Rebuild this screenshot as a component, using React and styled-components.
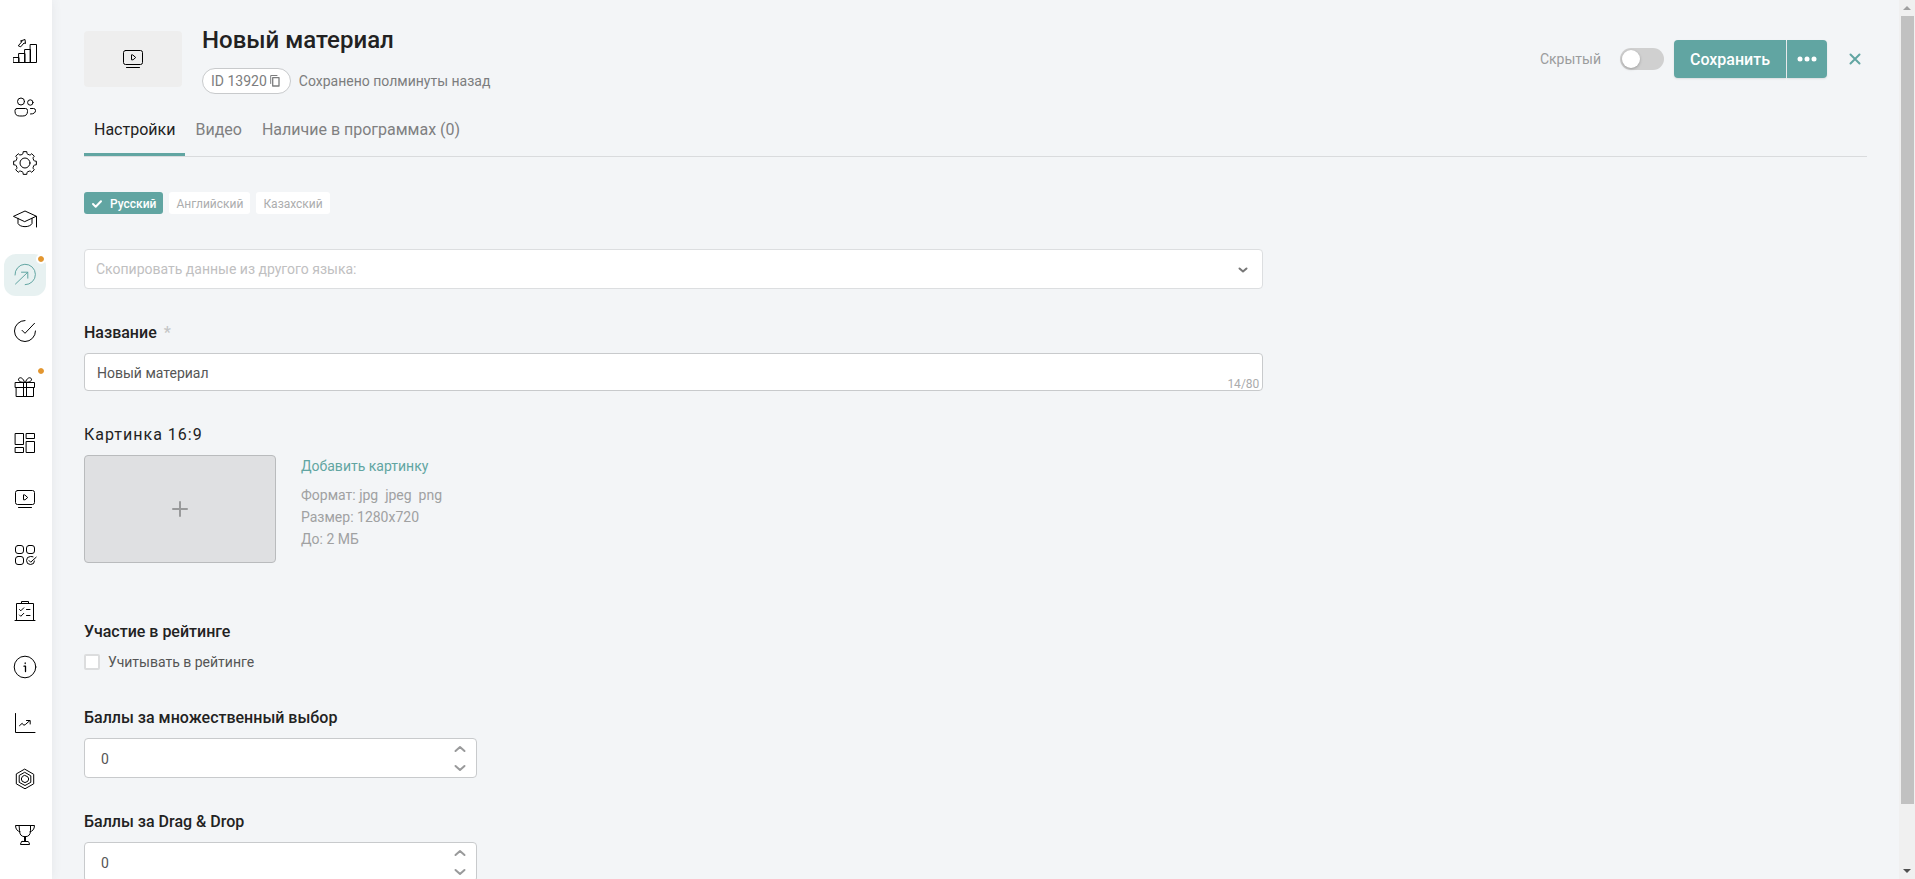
import React, { useState } from 'react';
import styled, { createGlobalStyle } from 'styled-components';

const TEAL = '#61a5a2';

const GlobalStyle = createGlobalStyle`
    *, *::before, *::after {
        box-sizing: border-box;
    }

    body {
        margin: 0;
        background: #f3f5f7;
        color: #222;
        font-family: Roboto, "Noto Sans", sans-serif;
        font-size: 14px;
    }

    button, input, select {
        font: inherit;
    }
`;

const Page = styled.div`
    display: flex;
    height: 100vh;
    overflow: hidden;
`;

const Sidebar = styled.nav`
    display: flex;
    flex-direction: column;
    flex: none;
    gap: 14px;
    width: 52px;
    padding: 30px 4px;
    background: #fff;
    box-shadow: 0 0 10px rgba(60, 70, 80, 0.08);
`;

const SideLink = styled.a`
    position: relative;
    display: flex;
    flex: none;
    align-items: center;
    justify-content: center;
    width: 42px;
    height: 42px;
    border-radius: 12px;
    color: ${({ $active }) => ($active ? TEAL : '#000')};
    background: ${({ $active }) => ($active ? '#e7f1f1' : 'transparent')};
`;

const Dot = styled.span`
    position: absolute;
    top: 0;
    right: 0;
    width: 10px;
    height: 10px;
    border: 2px solid #fff;
    border-radius: 50%;
    background: #e3962f;
    background-clip: padding-box;
`;

const Svg = styled.svg`
    display: block;
    flex: none;
    fill: none;
    stroke: currentColor;
    stroke-width: ${({ $stroke }) => $stroke || 1};
    stroke-linecap: round;
    stroke-linejoin: round;
`;

const Content = styled.main`
    flex: 1;
    min-width: 0;
    padding: 24px 32px 0;
    overflow: hidden;
`;

const Header = styled.header`
    display: flex;
    align-items: center;
    margin-bottom: 12px;
`;

const Thumb = styled.div`
    display: flex;
    align-items: center;
    justify-content: center;
    width: 98px;
    height: 56px;
    margin-right: 20px;
    border-radius: 4px;
    background: #eee;
    color: #000;
`;

const Info = styled.div`
    display: flex;
    flex: 1;
    flex-direction: column;
    gap: 12px;
`;

const Title = styled.h1`
    margin: 0;
    font-size: 24px;
    font-weight: 500;
    line-height: 32px;
`;

const Meta = styled.div`
    display: flex;
    align-items: center;
    gap: 8px;
    color: #7c7d7e;
`;

const IdButton = styled.button`
    display: flex;
    align-items: center;
    gap: 3px;
    height: 26px;
    padding: 0 10px 0 8px;
    border: 1px solid #c8cacc;
    border-radius: 13px;
    background: #fff;
    color: #7c7d7e;
    cursor: pointer;
`;

const Actions = styled.div`
    display: flex;
    align-items: center;
`;

const ToggleLabel = styled.label`
    display: flex;
    align-items: center;
    gap: 19px;
    margin-right: 10px;
    color: #9b9c9d;
`;

const Toggle = styled.input`
    appearance: none;
    display: flex;
    align-items: center;
    width: 44px;
    height: 22px;
    margin: 0;
    padding: 2px;
    border-radius: 11px;
    background: #d0d0d0;
    cursor: pointer;

    &::before {
        content: '';
        width: 18px;
        height: 18px;
        border-radius: 50%;
        background: #fff;
        box-shadow: 0 1px 3px rgba(0, 0, 0, 0.25);
    }

    &:checked {
        justify-content: flex-end;
        background: ${TEAL};
    }
`;

const SaveGroup = styled.div`
    display: flex;
    gap: 1px;
    margin-right: 16px;
`;

const SaveButton = styled.button`
    display: flex;
    align-items: center;
    justify-content: center;
    width: ${({ $icon }) => ($icon ? '40px' : '112px')};
    height: 38px;
    padding: 0;
    border: 0;
    border-radius: ${({ $icon }) => ($icon ? '0 4px 4px 0' : '4px 0 0 4px')};
    background: ${TEAL};
    box-shadow: 0 1px 2px rgba(0, 0, 0, 0.1);
    color: #fff;
    font-size: 16px;
    font-weight: 500;
    cursor: pointer;
`;

const CloseButton = styled.button`
    display: flex;
    align-items: center;
    justify-content: center;
    width: 24px;
    height: 24px;
    padding: 0;
    border: 0;
    background: none;
    color: ${TEAL};
    cursor: pointer;
`;

const Tabs = styled.div`
    display: flex;
    border-bottom: 1px solid #d9dbdd;
`;

const Tab = styled.button`
    height: 50px;
    padding: 0 10px;
    border: 0;
    border-bottom: 3px solid ${({ $active }) => ($active ? TEAL : 'transparent')};
    background: none;
    color: ${({ $active }) => ($active ? '#222' : '#7f8081')};
    font-size: 16px;
    cursor: pointer;
`;

const Languages = styled.div`
    display: flex;
    gap: 6px;
    margin: 35px 0;
`;

const Language = styled.button`
    display: flex;
    align-items: center;
    gap: 7px;
    height: 22px;
    padding: 1px 7px 0;
    border: 0;
    border-radius: 3px;
    background: ${({ $active }) => ($active ? TEAL : '#fff')};
    color: ${({ $active }) => ($active ? '#fff' : '#acadae')};
    font-size: 12px;
    font-weight: ${({ $active }) => ($active ? 500 : 400)};
    cursor: pointer;
`;

const Columns = styled.div`
    display: grid;
    grid-template-columns: 2fr 1fr;
    gap: 14px;
`;

const Form = styled.form`
    display: flex;
    flex-direction: column;
    gap: 32px;
`;

const SelectBox = styled.div`
    position: relative;
    display: flex;
`;

const Select = styled.select`
    appearance: none;
    width: 100%;
    height: 40px;
    padding: 0 40px 0 11px;
    border: 1px solid #dcdee0;
    border-radius: 4px;
    background: #fff;
    color: #bfc0c1;
`;

const SelectArrow = styled.span`
    position: absolute;
    top: 17px;
    right: 14px;
    color: #777;
    pointer-events: none;
`;

const Field = styled.div`
    display: flex;
    flex-direction: column;
    gap: ${({ $gap }) => $gap || 8}px;
`;

const Label = styled.label`
    font-size: 16px;
    font-weight: 500;
    line-height: 24px;
`;

const ImageLabel = styled.h2`
    margin: 0;
    font-size: 16px;
    font-weight: 400;
    line-height: 24px;
    letter-spacing: 1px;
`;

const Required = styled.span`
    margin-left: 3px;
    color: #c4c5c6;
`;

const InputBox = styled.div`
    position: relative;
    display: flex;
    width: ${({ $small }) => ($small ? '33.3333%' : '100%')};
`;

const TextInput = styled.input`
    width: 100%;
    height: 38px;
    padding: 2px 12px 0;
    border: 1px solid #c8cacc;
    border-radius: 4px;
    background: #fff;
    color: #555;
`;

const NumberInput = styled(TextInput)`
    appearance: textfield;
    height: 40px;
    padding: 2px 32px 0 16px;

    &::-webkit-inner-spin-button {
        display: none;
    }
`;

const Counter = styled.span`
    position: absolute;
    right: 4px;
    bottom: 0;
    color: #aaabac;
    font-size: 12px;
    line-height: 14px;
`;

const Steps = styled.div`
    position: absolute;
    top: 1px;
    right: 6px;
    bottom: 1px;
    display: flex;
    flex-direction: column;
`;

const Step = styled.button`
    display: flex;
    flex: 1;
    align-items: center;
    justify-content: center;
    width: 22px;
    padding: 0;
    border: 0;
    background: none;
    color: #999a9b;
    cursor: pointer;
`;

const Upload = styled.div`
    display: flex;
    gap: 25px;
    margin-bottom: 25px;
`;

const UploadButton = styled.button`
    display: flex;
    align-items: center;
    justify-content: center;
    width: 192px;
    height: 108px;
    border: 1px solid #b9bbbd;
    border-radius: 4px;
    background: #dfe0e2;
    color: #999a9b;
    cursor: pointer;
`;

const UploadInfo = styled.div`
    color: #a0a1a2;
    line-height: 22px;
    white-space: pre;
`;

const UploadLink = styled.a`
    display: block;
    margin-bottom: 7px;
    color: ${TEAL};
    text-decoration: none;
`;

const CheckLabel = styled.label`
    display: flex;
    align-items: center;
    gap: 8px;
    color: #555;
    line-height: 24px;
`;

const Checkbox = styled.input`
    appearance: none;
    width: 16px;
    height: 16px;
    margin: 0;
    border: 2px solid #dcddde;
    border-radius: 2px;
    background: #fff;

    &:checked {
        background: ${TEAL};
    }
`;

const Scrollbar = styled.div`
    display: flex;
    flex: none;
    flex-direction: column;
    align-items: center;
    width: 16px;
    background: #f0f0f0;
`;

const ScrollArrow = styled.div`
    display: flex;
    align-items: center;
    justify-content: center;
    height: 16px;
    color: ${({ $dim }) => ($dim ? '#a0a0a0' : '#505050')};
`;

const ScrollTrack = styled.div`
    flex: 1;
    width: 13px;
`;

const ScrollThumb = styled.div`
    height: 93%;
    background: #c1c1c1;
`;

const gearPath = () => {
    const points = [];
    for (let i = 0; i < 8; i += 1) {
        [[-17, 9.2], [-12, 9.6], [-9, 11.5], [9, 11.5], [12, 9.6], [17, 9.2]].forEach(([shift, r]) => {
            const angle = ((i * 45 + shift) * Math.PI) / 180;
            points.push(`${(12 + r * Math.sin(angle)).toFixed(2)} ${(12 - r * Math.cos(angle)).toFixed(2)}`);
        });
    }
    return `M${points.join('L')}Z`;
};

const MediaShape = () => (
    <>
        <rect x="2.5" y="3.5" width="19" height="14" rx="2" />
        <path d="M5.5 20.5h13M10.5 8.2v4.6h1.6l2.6-2.3-2.6-2.3z" />
    </>
);

const MENU = [
    {
        name: 'Рейтинг',
        shape: <path d="M.5 18.5h5.5v5H.5zM6 14.5h6v9H6zM12 10.5h5.500v13H12zM17.500 5.500h6v18h-6zM5.500 6.500l3.500-4-1.500-.5 4.500-1.500.5 4-1.500-.5-3 3.500z" />
    },
    {
        name: 'Пользователи',
        shape: (
            <>
                <circle cx="8" cy="6.5" r="3.5" />
                <circle cx="17.300" cy="7.500" r="2.700" />
                <path d="M4 13.500h8.500q2 0 2 2v.8q0 4.700-4.700 4.700H6.700q-4.700 0-4.700-4.700v-.8q0-2 2-2zM17.500 13.500h3q2 0 2 2 0 3.500-5 3.500" />
            </>
        )
    },
    {
        name: 'Настройки',
        shape: (
            <>
                <path d={gearPath()} />
                <circle cx="12" cy="12" r="5" />
            </>
        )
    },
    {
        name: 'Обучение',
        shape: <path d="M.8 9.200 12 4l11.300 5.200L12 14.500zM5 11.300v5.200c2 4.200 12 4.200 14 0v-5.200M23.500 9.500V20" />
    },
    {
        name: 'Материалы',
        active: true,
        dot: true,
        shape: <path d="M2 12A10.200 10.200 0 1 1 12.200 21.700M2.500 21 14.800 9.200M8.500 9.200h6.300v6" />
    },
    {
        name: 'Задания',
        shape: <path d="M12 1.500A10.500 10.500 0 1 0 22.500 12M9 11.300l3 3L21.500 4.300" />
    },
    {
        name: 'Подарки',
        dot: true,
        shape: <path d="M2.500 7.500h19v5h-19zM3.500 12.500h17v9h-17zM10.500 7.500v14M13.500 7.500v14M11.500 7.300C9 7.500 5 6.500 5.500 4.200S10 1.800 11.500 7.300zM12.500 7.300c2.500.2 6.500-.8 6-3.100S14 1.800 12.500 7.300z" />
    },
    {
        name: 'Панель',
        shape: <path d="M2.500 2.500h8v11h-8zM13.500 2.500h8v5h-8zM2.500 16.500h8v5h-8zM13.500 10.500h8v11h-8z" />
    },
    { name: 'Видео', shape: <MediaShape /> },
    {
        name: 'Приложения',
        shape: (
            <>
                <rect x="2.500" y="2.500" width="8" height="8" rx="2.500" />
                <rect x="13.500" y="2.500" width="8" height="8" rx="2.500" />
                <rect x="2.500" y="13.500" width="8" height="8" rx="2.500" />
                <path d="M20 13.800q-1-.3-2.500-.3-4 0-4 4t4 4 4-3.500M16 17.500l1.700 1.700 5.500-5" />
            </>
        )
    },
    {
        name: 'Тесты',
        shape: <path d="M3.500 21.500v-17h17v17M2 21.500h20M8.500 4.500v-2h7v2M6.500 10.500l1.300 1.300 3-3M6.500 16l1.300 1.300 3-3M13.500 10.500h3.500M13.500 16.500h3.500" />
    },
    {
        name: 'Информация',
        shape: (
            <>
                <circle cx="12" cy="12" r="10.800" />
                <path d="M11 11.200h1.500v5.300M12.200 8v.5" strokeWidth="1.300" />
            </>
        )
    },
    {
        name: 'Статистика',
        shape: <path d="M2.500 2.500v19h19.500M6.500 14.700l2.700-2.400 1.500 1.900 1.500-.5 4.500-4M13.500 9.500h3.700v3.500" />
    },
    {
        name: 'Токены',
        shape: <path d="m12 2.300 8.700 5v9.500l-8.700 5-8.700-5V7.300zM12 5.500l5.800 3.300v6.500L12 18.500l-5.800-3.200V8.800zM12 8.500l2.800 1.300.9 2.200-.9 2.300-2.800 1.300-2.800-1.300-.9-2.300.9-2.200z" />
    },
    {
        name: 'Достижения',
        shape: <path d="M6.500 2.500h11v5.200q0 6-5.500 6t-5.500-6zM6.500 2.500h-4q.2 5.500 4.500 6.200M17.500 2.500h4q-.2 5.500-4.500 6.200M11.500 13.700v4.500M12.500 13.700v4.500M9 18.500h6q1.500.5 1.500 3h-9q0-2.500 1.500-3z" />
    }
];

const LANGUAGES = ['Русский', 'Английский', 'Казахский'];
const TABS = ['Настройки', 'Видео', 'Наличие в программах (0)'];

const Icon = ({ children }) => (
    <Svg width="24" height="24" viewBox="0 0 24 24" aria-hidden="true">{children}</Svg>
);

const PointsField = ({ id, label }) => {
    const [value, setValue] = useState(0);

    return (
        <Field>
            <Label htmlFor={id}>{label}</Label>
            <InputBox $small>
                <NumberInput
                    id={id}
                    type="number"
                    value={value}
                    onChange={(e) => setValue(Number(e.target.value))} />
                <Steps>
                    <Step type="button" aria-label="Увеличить" onClick={() => setValue(value + 1)}>
                        <Svg $stroke={2} width="12" height="8" viewBox="0 0 12 8"><path d="m1.500 6 4.500-4 4.500 4" /></Svg>
                    </Step>
                    <Step type="button" aria-label="Уменьшить" onClick={() => setValue(value - 1)}>
                        <Svg $stroke={2} width="12" height="8" viewBox="0 0 12 8"><path d="m1.500 2 4.500 4 4.500-4" /></Svg>
                    </Step>
                </Steps>
            </InputBox>
        </Field>
    );
};

const App = () => {
    const [tab, setTab] = useState(TABS[0]);
    const [language, setLanguage] = useState(LANGUAGES[0]);
    const [name, setName] = useState('Новый материал');

    return (
        <Page>
            <GlobalStyle />
            <Sidebar>
                {MENU.map((item) => (
                    <SideLink key={item.name} href="#" aria-label={item.name} $active={item.active}>
                        <Icon>{item.shape}</Icon>
                        {item.dot && <Dot />}
                    </SideLink>
                ))}
            </Sidebar>
            <Content>
                <Header>
                    <Thumb>
                        <Icon><MediaShape /></Icon>
                    </Thumb>
                    <Info>
                        <Title>Новый материал</Title>
                        <Meta>
                            <IdButton type="button">
                                ID 13920
                                <Svg $stroke={1} width="10" height="12" viewBox="0 0 10 12">
                                    <path d="M.7 8.500v-8h6.300" />
                                    <path d="M2.700 2.700h6.300v8.300H2.700z" strokeWidth="1.300" />
                                </Svg>
                            </IdButton>
                            <span>Сохранено полминуты назад</span>
                        </Meta>
                    </Info>
                    <Actions>
                        <ToggleLabel>
                            Скрытый
                            <Toggle type="checkbox" role="switch" />
                        </ToggleLabel>
                        <SaveGroup>
                            <SaveButton type="button">Сохранить</SaveButton>
                            <SaveButton type="button" aria-label="Ещё" $icon>
                                <Svg width="20" height="6" viewBox="0 0 20 6">
                                    <g fill="currentColor" stroke="none">
                                        <circle cx="3" cy="3" r="2.500" />
                                        <circle cx="10" cy="3" r="2.500" />
                                        <circle cx="17" cy="3" r="2.500" />
                                    </g>
                                </Svg>
                            </SaveButton>
                        </SaveGroup>
                        <CloseButton type="button" aria-label="Закрыть">
                            <Svg $stroke={2} width="12" height="12" viewBox="0 0 12 12">
                                <path d="m1.500 1.500 9 9M10.500 1.500l-9 9" />
                            </Svg>
                        </CloseButton>
                    </Actions>
                </Header>
                <Tabs>
                    {TABS.map((item) => (
                        <Tab key={item} type="button" $active={item === tab} onClick={() => setTab(item)}>
                            {item}
                        </Tab>
                    ))}
                </Tabs>
                <Languages>
                    {LANGUAGES.map((item) => (
                        <Language key={item} type="button" $active={item === language} onClick={() => setLanguage(item)}>
                            {item === language && (
                                <Svg $stroke={2} width="12" height="10" viewBox="0 0 12 10"><path d="m2 5 2.700 2.700L10 2.200" /></Svg>
                            )}
                            {item}
                        </Language>
                    ))}
                </Languages>
                <Columns>
                    <Form>
                        <SelectBox>
                            <Select aria-label="Скопировать данные из другого языка" defaultValue="">
                                <option value="">Скопировать данные из другого языка:</option>
                                {LANGUAGES.slice(1).map((item) => <option key={item}>{item}</option>)}
                            </Select>
                            <SelectArrow>
                                <Svg $stroke={2} width="12" height="8" viewBox="0 0 12 8"><path d="m2.500 2.500 3.500 3 3.500-3" /></Svg>
                            </SelectArrow>
                        </SelectBox>
                        <Field>
                            <Label htmlFor="name">
                                Название <Required>*</Required>
                            </Label>
                            <InputBox>
                                <TextInput id="name" type="text" maxLength={80} value={name} onChange={(e) => setName(e.target.value)} />
                                <Counter>{name.length}/80</Counter>
                            </InputBox>
                        </Field>
                        <Field>
                            <ImageLabel>Картинка 16:9</ImageLabel>
                            <Upload>
                                <UploadButton type="button" aria-label="Загрузить картинку">
                                    <Svg $stroke={2} width="16" height="16" viewBox="0 0 16 16"><path d="M8 1v14M1 8h14" /></Svg>
                                </UploadButton>
                                <UploadInfo>
                                    <UploadLink href="#">Добавить картинку</UploadLink>
                                    <div>{'Формат: jpg  jpeg  png'}</div>
                                    <div>Размер: 1280x720</div>
                                    <div>До: 2 МБ</div>
                                </UploadInfo>
                            </Upload>
                        </Field>
                        <Field $gap={6}>
                            <Label htmlFor="rating">Участие в рейтинге</Label>
                            <CheckLabel>
                                <Checkbox id="rating" type="checkbox" />
                                Учитывать в рейтинге
                            </CheckLabel>
                        </Field>
                        <PointsField id="choice" label="Баллы за множественный выбор" />
                        <PointsField id="drag" label="Баллы за Drag & Drop" />
                    </Form>
                </Columns>
            </Content>
            <Scrollbar>
                <ScrollArrow $dim>
                    <svg width="8" height="4" viewBox="0 0 8 4"><path d="M0 4 4 0l4 4z" fill="currentColor" /></svg>
                </ScrollArrow>
                <ScrollTrack>
                    <ScrollThumb />
                </ScrollTrack>
                <ScrollArrow>
                    <svg width="8" height="4" viewBox="0 0 8 4"><path d="m0 0 4 4 4-4z" fill="currentColor" /></svg>
                </ScrollArrow>
            </Scrollbar>
        </Page>
    );
};

export default App;
